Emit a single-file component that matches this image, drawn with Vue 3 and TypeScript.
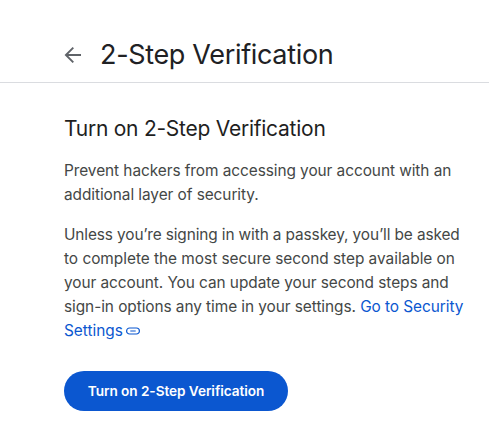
<script setup lang="ts">
const title = '2-Step Verification'
const action = 'Turn on 2-Step Verification'
</script>

<template>
  <div class="page">
    <header class="bar">
      <button class="back" aria-label="Back">
        <svg width="18" height="18" viewBox="0 0 18 18" fill="none" stroke="#5f6368" stroke-width="1.9">
          <path d="M17 9H2.5M9.3 1.6 1.9 9l7.4 7.4" />
        </svg>
      </button>
      <h1>{{ title }}</h1>
    </header>
    <main>
      <h2>{{ action }}</h2>
      <p>
        <span class="line snug">Prevent hackers from accessing your account with an</span>
        <span class="line snug">additional layer of security.</span>
      </p>
      <p>
        <span class="line tight">Unless you’re signing in with a passkey, you’ll be asked</span>
        <span class="line loose">to complete the most secure second step available on</span>
        <span class="line snug">your account. You can update your second steps and</span>
        <span class="line snug">sign-in options any time in your settings. <a>Go to Security</a></span>
        <a class="line">Settings
          <svg class="chain" width="14" height="8" viewBox="0 0 14 8" fill="none" stroke="currentColor" stroke-width="1.2">
            <path d="M6.2 1H3.6a3 3 0 0 0 0 6h2.6M7.8 1h2.6a3 3 0 0 1 0 6H7.8M4.3 4h5.4M6 1h2M6 7h2" />
          </svg>
        </a>
      </p>
      <button class="primary">{{ action }}</button>
    </main>
  </div>
</template>

<style>
body { background: #fff; }
</style>

<style scoped>
.page {
  height: 446px;
  overflow: hidden;
  background: #fff;
  color: #444746;
  font-family: Inter, "Liberation Sans", sans-serif;
}
.bar {
  box-sizing: border-box;
  height: 83px;
  padding: 28px 0 0 64px;
  border-bottom: 1px solid #dadce0;
  display: flex;
  align-items: flex-start;
}
button {
  border: 0;
  padding: 0;
  font-family: inherit;
}
.back {
  width: 18px;
  height: 54px;
  margin-right: 18px;
  background: none;
  display: flex;
  align-items: center;
}
h1 {
  margin: 0;
  color: #202124;
  font-size: 27px;
  font-weight: 400;
  line-height: 53px;
  letter-spacing: -0.33px;
  white-space: nowrap;
}
main { padding: 32px 0 0 64px; }
h2 {
  margin: 0 0 16px;
  color: #1f1f1f;
  font-size: 21px;
  font-weight: 400;
  line-height: 28px;
  letter-spacing: -0.25px;
  white-space: nowrap;
}
p {
  margin: 0 0 16px;
  font-size: 15.4px;
  line-height: 24px;
}
.line {
  display: block;
  white-space: nowrap;
}
.loose { letter-spacing: -0.02px; }
.snug { letter-spacing: -0.06px; }
.tight { letter-spacing: -0.11px; }
a { color: #0b57d0; }
.chain {
  margin-left: -1px;
  vertical-align: 1px;
}
.primary {
  width: 224px;
  height: 40px;
  margin-top: 12px;
  border-radius: 20px;
  background: #0b57d0;
  color: #fff;
  font-size: 13.6px;
  font-weight: 600;
  letter-spacing: -0.05px;
}
</style>
